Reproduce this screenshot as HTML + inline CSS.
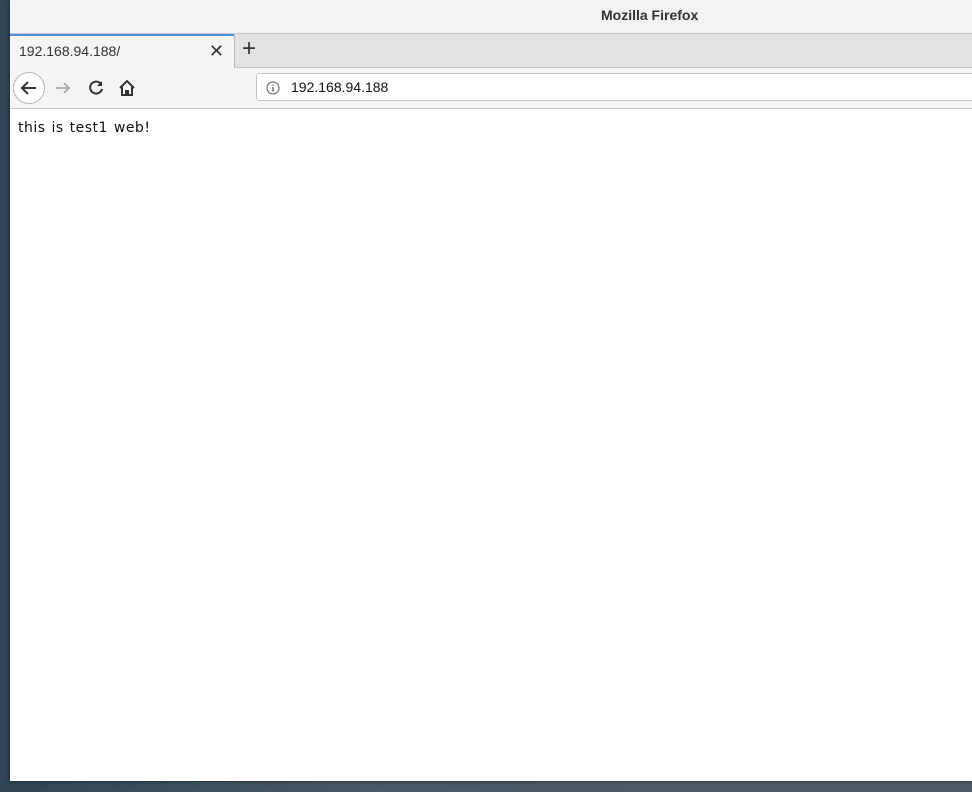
<!DOCTYPE html>
<html><head><meta charset="utf-8"><style>
body{margin:0;width:972px;height:792px;overflow:hidden;background:linear-gradient(90deg,#2d4556,#4a5a66 40%,#4d5a63);font-family:"Liberation Sans","DejaVu Sans",sans-serif;position:relative}
.win{position:absolute;left:10px;top:0;width:962px;height:781px;background:#fff;box-shadow:0 0 4px rgba(0,0,0,.6)}
.title{height:33px;background:#f2f2f2;border-bottom:1px solid #c8c8c8;line-height:31px;font-size:14px;color:#2e3436;position:relative}
.title span{position:absolute;left:591px;font-weight:bold}
.tabs{height:34px;background:#e3e3e3;position:relative;border-bottom:1px solid #c4c4c4;box-sizing:border-box}
.tab{position:absolute;left:0;top:0;width:224px;height:34px;background:#f5f5f5;border-top:2px solid #4a90d9;box-sizing:border-box;font-size:14px;color:#333;line-height:30px;padding-left:9px}
.tab .x{position:absolute;right:10px;top:0;font-size:18px;color:#333}
.plus{position:absolute;left:224px;top:0;width:738px;height:33px;border-left:1px solid #bbb;box-sizing:border-box;font-size:24px;line-height:30px;padding-left:7px;color:#333}
.nav{height:41px;background:#f5f5f5;border-bottom:1px solid #c8c8c8;position:relative;box-sizing:border-box}
.back{position:absolute;left:3px;top:4px;width:30px;height:30px;border:1px solid #b8b8b8;border-radius:50%;background:#fff}
.url{position:absolute;left:246px;top:5px;width:720px;height:28px;border:1px solid #c6c6c6;border-radius:3px;background:#fff;box-sizing:border-box;font-size:14px;line-height:26px;padding-left:34px;color:#111}
.content{padding:11px 8px;font-family:"DejaVu Sans",sans-serif;font-size:14px;color:#111;letter-spacing:0.5px;word-spacing:1px}
</style></head><body>
<div class="win">
<div class="title"><span>Mozilla Firefox</span></div>
<div class="tabs"><div class="tab">192.168.94.188/<span class="x">✕</span></div><div class="plus">+</div></div>
<div class="nav">
<div class="back"><svg width="30" height="30" viewBox="0 0 30 30"><path d="M22 15H8M14 9l-6 6 6 6" stroke="#333" stroke-width="2" fill="none"/></svg></div>
<svg style="position:absolute;left:43px;top:10px" width="20" height="20" viewBox="0 0 20 20"><path d="M3 10h13M11 5l5 5-5 5" stroke="#aaa" stroke-width="1.8" fill="none"/></svg>
<svg style="position:absolute;left:76px;top:10px" width="20" height="20" viewBox="0 0 20 20"><path d="M15 6A6 6 0 1 0 16 11" stroke="#333" stroke-width="2" fill="none"/><path d="M16 3v5h-5z" fill="#333"/></svg>
<svg style="position:absolute;left:107px;top:10px" width="20" height="20" viewBox="0 0 20 20"><path d="M3 10L10 3l7 7M5 9v8h4v-4h2v4h4V9" stroke="#333" stroke-width="2" fill="none"/></svg>
<div class="url"><svg style="position:absolute;left:9px;top:7px" width="14" height="14" viewBox="0 0 14 14"><circle cx="7" cy="7" r="6" stroke="#555" fill="none"/><path d="M7 6v4.5M7 3.5v1.2" stroke="#555" stroke-width="1.3"/></svg>192.168.94.188</div>
</div>
<div class="content">this is test1 web!</div>
</div>
</body></html>
